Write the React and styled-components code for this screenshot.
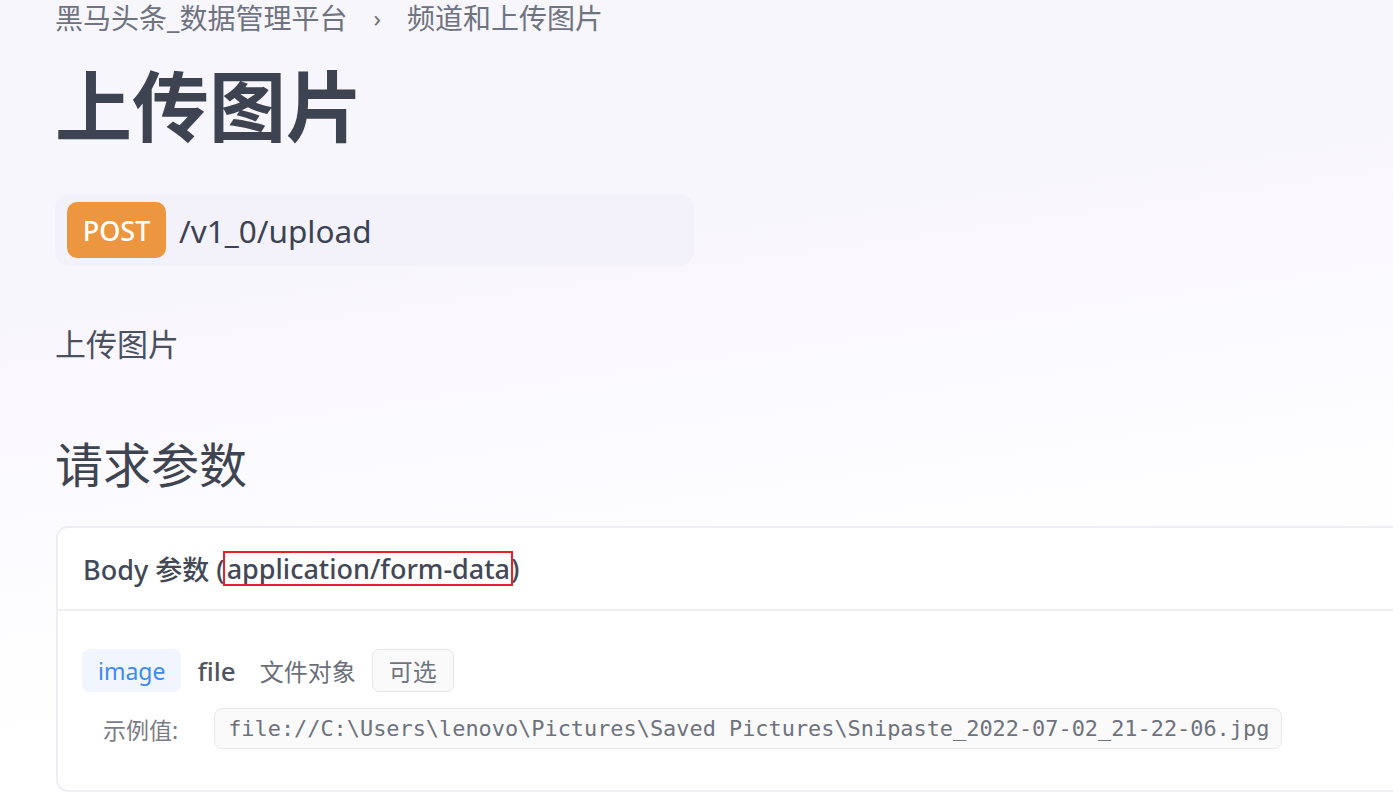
import styled, { createGlobalStyle } from 'styled-components';

const Global = createGlobalStyle`
  html, body {
    margin: 0;
    padding: 0;
    background: #fff;
  }
  body {
    font-family: 'Noto Sans', 'Noto Sans CJK SC', sans-serif;
  }
`;

const Page = styled.div`
  width: 1393px;
  height: 802px;
  overflow: hidden;
  background: linear-gradient(172deg, #f6f6fb 0%, #f8f6fd 30%, #fcfbff 55%, #ffffff 75%);
  padding-left: 55px;
  box-sizing: border-box;
`;

const Content = styled.div`
  width: 1380px;
`;

const Breadcrumb = styled.div`
  display: flex;
  align-items: center;
  gap: 26px;
  height: 36px;
  font-size: 28px;
  color: #6f7380;
  line-height: 36px;
`;

const Sep = styled.span`
  font-size: 24px;
  color: #6f7380;
`;

const Title = styled.h1`
  margin: 26px 0 0;
  font-size: 77px;
  font-weight: 700;
  line-height: 90px;
  color: #3d4350;
`;

const Endpoint = styled.div`
  margin-top: 42px;
  width: 639px;
  height: 72px;
  box-sizing: border-box;
  padding: 8px 12px;
  display: flex;
  align-items: center;
  gap: 13px;
  background: #f3f2fb;
  border-radius: 14px;
`;

const Method = styled.span`
  display: flex;
  align-items: center;
  justify-content: center;
  width: 99px;
  height: 56px;
  border-radius: 10px;
  background: #ec9640;
  color: #fff;
  font-size: 27px;
  font-weight: 500;
`;

const Path = styled.span`
  font-size: 31.5px;
  color: #3c4250;
`;

const Desc = styled.p`
  margin: 56px 0 0;
  font-size: 31px;
  line-height: 44px;
  color: #4b5060;
`;

const SectionTitle = styled.h2`
  margin: 67px 0 0;
  font-size: 48px;
  font-weight: 400;
  line-height: 64px;
  color: #3f4451;
`;

const Card = styled.div`
  margin-top: 29px;
  margin-left: 1px;
  border: 2px solid #eeeef5;
  border-radius: 12px;
  background: #fff;
  height: 266px;
  box-sizing: border-box;
`;

const CardHeader = styled.div`
  height: 81px;
  display: flex;
  align-items: center;
  padding-left: 25px;
  border-bottom: 2px solid #eeeef5;
  font-size: 27px;
  font-weight: 500;
  color: #434856;
  white-space: pre;
`;

const Marked = styled.span`
  display: inline-block;
  height: 31px;
  line-height: 31px;
  outline: 2px solid #e8202a;
  padding: 0 1px 0 2px;
`;

const CardBody = styled.div`
  padding: 38px 24px 0;
`;

const ParamRow = styled.div`
  display: flex;
  align-items: center;
  gap: 16px;
`;

const Tag = styled.span`
  display: inline-flex;
  align-items: center;
  height: 43px;
  box-sizing: border-box;
  padding: 0 ${(p) => (p.$tone === 'blue' ? 15 : 16)}px;
  border-radius: 7px;
  font-size: ${(p) => (p.$tone === 'blue' ? 23 : 24)}px;
  color: ${(p) => (p.$tone === 'blue' ? '#3b8af5' : '#707480')};
  background: ${(p) => (p.$tone === 'blue' ? '#f1f6fe' : '#fafafa')};
  border: 1px solid ${(p) => (p.$tone === 'blue' ? 'transparent' : '#e6e6ea')};
`;

const Type = styled.span`
  font-size: 26px;
  font-weight: 500;
  color: #50545f;
  margin-right: 8px;
`;

const Note = styled.span`
  font-size: 24px;
  color: #6b6f7a;
`;

const ExampleRow = styled.div`
  display: flex;
  align-items: center;
  gap: 36px;
  margin-top: 16px;
  padding-left: 21px;
`;

const ExampleLabel = styled.span`
  font-size: 23px;
  color: #7a7d87;
`;

const Code = styled.code`
  display: inline-flex;
  align-items: center;
  height: 41px;
  box-sizing: border-box;
  padding: 0 12px 0 13px;
  border: 1px solid #e8e8ec;
  border-radius: 8px;
  background: #fafafa;
  font-family: 'DejaVu Sans Mono', 'Liberation Mono', monospace;
  font-size: 21.9px;
  color: #6e727d;
`;

export default function App() {
  return (
    <Page>
      <Global />
      <Content>
        <Breadcrumb>
          <span>黑马头条_数据管理平台</span>
          <Sep>›</Sep>
          <span>频道和上传图片</span>
        </Breadcrumb>
        <Title>上传图片</Title>
        <Endpoint>
          <Method>POST</Method>
          <Path>/v1_0/upload</Path>
        </Endpoint>
        <Desc>上传图片</Desc>
        <SectionTitle>请求参数</SectionTitle>
        <Card>
          <CardHeader>
            Body 参数 (<Marked>application/form-data</Marked>)
          </CardHeader>
          <CardBody>
            <ParamRow>
              <Tag $tone="blue">image</Tag>
              <Type>file</Type>
              <Note>文件对象</Note>
              <Tag>可选</Tag>
            </ParamRow>
            <ExampleRow>
              <ExampleLabel>示例值:</ExampleLabel>
              <Code>file://C:\Users\lenovo\Pictures\Saved Pictures\Snipaste_2022-07-02_21-22-06.jpg</Code>
            </ExampleRow>
          </CardBody>
        </Card>
      </Content>
    </Page>
  );
}
